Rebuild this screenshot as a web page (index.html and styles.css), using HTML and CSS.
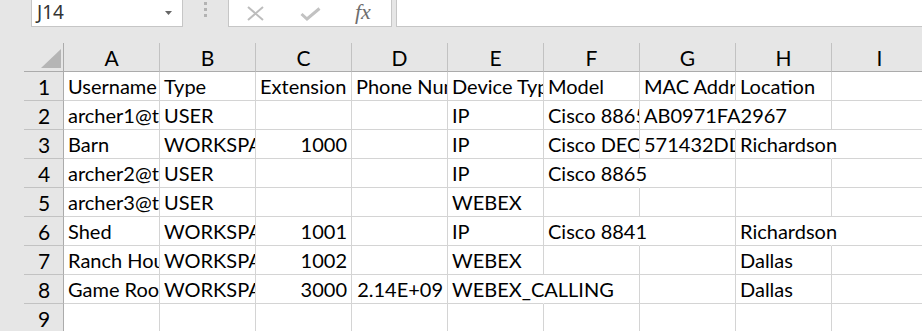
FILE: index.html
```html
<!DOCTYPE html>
<html>
<head>
    <title>Book1 - Excel</title>
    <link rel="stylesheet" href="styles.css">
</head>
<body>
    <div class="bar">
        <div class="namebox">
            <span>J14</span>
            <svg class="caret" width="7" height="4" viewBox="0 0 7 4"><polygon points="0,0 7,0 3.5,4" fill="#666"/></svg>
        </div>
        <div class="grip"><i></i><i></i><i></i></div>
        <div class="fxbox">
            <svg class="cancel" width="17" height="15" viewBox="0 0 17 15"><path d="M1 1 L16 14 M16 1 L1 14" stroke="#bdbdbd" stroke-width="2"/></svg>
            <svg class="enter" width="21" height="14" viewBox="0 0 21 14"><path d="M1.5 7 L7 12 L19.5 1.5" stroke="#c2c2c2" stroke-width="3" fill="none"/></svg>
            <span class="fx">fx</span>
        </div>
        <div class="formula"></div>
    </div>

    <div class="sheet">
        <div class="grid">
            <div class="corner"><svg width="20" height="19" viewBox="0 0 20 19"><polygon points="20,0 20,19 0,19" fill="#b5b5b5"/></svg></div>
            <div class="colhead">A</div>
            <div class="colhead">B</div>
            <div class="colhead">C</div>
            <div class="colhead">D</div>
            <div class="colhead">E</div>
            <div class="colhead">F</div>
            <div class="colhead">G</div>
            <div class="colhead">H</div>
            <div class="colhead">I</div>

            <div class="rowhead">1</div>
            <div class="cell">Username</div>
            <div class="cell">Type</div>
            <div class="cell">Extension</div>
            <div class="cell">Phone Number</div>
            <div class="cell">Device Type</div>
            <div class="cell">Model</div>
            <div class="cell">MAC Address</div>
            <div class="cell">Location</div>
            <div class="cell"></div>

            <div class="rowhead">2</div>
            <div class="cell">archer1@test.com</div>
            <div class="cell">USER</div>
            <div class="cell"></div>
            <div class="cell"></div>
            <div class="cell">IP</div>
            <div class="cell">Cisco 8865</div>
            <div class="cell spill">AB0971FA2967</div>
            <div class="cell"></div>
            <div class="cell"></div>

            <div class="rowhead">3</div>
            <div class="cell">Barn</div>
            <div class="cell">WORKSPACE</div>
            <div class="cell num">1000</div>
            <div class="cell"></div>
            <div class="cell">IP</div>
            <div class="cell">Cisco DECT 6825</div>
            <div class="cell">571432DD0F3A</div>
            <div class="cell spill">Richardson</div>
            <div class="cell"></div>

            <div class="rowhead">4</div>
            <div class="cell">archer2@test.com</div>
            <div class="cell">USER</div>
            <div class="cell"></div>
            <div class="cell"></div>
            <div class="cell">IP</div>
            <div class="cell spill">Cisco 8865</div>
            <div class="cell"></div>
            <div class="cell"></div>
            <div class="cell"></div>

            <div class="rowhead">5</div>
            <div class="cell">archer3@test.com</div>
            <div class="cell">USER</div>
            <div class="cell"></div>
            <div class="cell"></div>
            <div class="cell">WEBEX</div>
            <div class="cell"></div>
            <div class="cell"></div>
            <div class="cell"></div>
            <div class="cell"></div>

            <div class="rowhead">6</div>
            <div class="cell">Shed</div>
            <div class="cell">WORKSPACE</div>
            <div class="cell num">1001</div>
            <div class="cell"></div>
            <div class="cell">IP</div>
            <div class="cell spill">Cisco 8841</div>
            <div class="cell"></div>
            <div class="cell spill">Richardson</div>
            <div class="cell"></div>

            <div class="rowhead">7</div>
            <div class="cell">Ranch House</div>
            <div class="cell">WORKSPACE</div>
            <div class="cell num">1002</div>
            <div class="cell"></div>
            <div class="cell">WEBEX</div>
            <div class="cell"></div>
            <div class="cell"></div>
            <div class="cell">Dallas</div>
            <div class="cell"></div>

            <div class="rowhead">8</div>
            <div class="cell">Game Room</div>
            <div class="cell">WORKSPACE</div>
            <div class="cell num">3000</div>
            <div class="cell num">2.14E+09</div>
            <div class="cell spill">WEBEX_CALLING</div>
            <div class="cell"></div>
            <div class="cell"></div>
            <div class="cell">Dallas</div>
            <div class="cell"></div>

            <div class="rowhead">9</div>
            <div class="cell"></div>
            <div class="cell"></div>
            <div class="cell"></div>
            <div class="cell"></div>
            <div class="cell"></div>
            <div class="cell"></div>
            <div class="cell"></div>
            <div class="cell"></div>
            <div class="cell"></div>
        </div>
    </div>
</body>
</html>
```

FILE: styles.css
```css
html, body {
    margin: 0;
    height: 100%;
    overflow: hidden;
}
body {
    background-color: #e6e6e6;
    font-family: Lato, "Liberation Sans", sans-serif;
    color: #000;
}

/* formula bar */
.bar {
    display: flex;
    height: 27px;
}
.namebox {
    box-sizing: border-box;
    width: 152px;
    margin-left: 31px;
    display: flex;
    align-items: center;
    justify-content: space-between;
    padding: 0 10px 2px 5px;
    background: white;
    border: 1px solid #c6c6c6;
    border-top: none;
    font-family: "Noto Sans", sans-serif;
    font-size: 19px;
    color: #333;
}
.caret {
    margin-top: 1px;
}
.grip {
    width: 45px;
    display: flex;
    flex-direction: column;
    align-items: center;
    gap: 3px;
    padding-top: 2px;
}
.grip i {
    width: 3px;
    height: 3px;
    background: #b3b3b3;
}
.fxbox {
    box-sizing: border-box;
    width: 164px;
    display: flex;
    align-items: center;
    background: white;
    border: 1px solid #c6c6c6;
    border-top: none;
}
.cancel {
    margin-left: 18px;
    margin-top: 1px;
}
.enter {
    margin-left: 36px;
    margin-top: 2px;
}
.fx {
    margin-left: 34px;
    font-family: "Liberation Serif", serif;
    font-style: italic;
    font-size: 22px;
    color: #6e6e6e;
    margin-bottom: 3px;
}
.formula {
    flex: 1;
    margin-left: 4px;
    background: white;
    border: 1px solid #c6c6c6;
    border-top: none;
    border-right: none;
}

/* sheet */
.sheet {
    margin-top: 16px;
    padding-left: 24px;
}
.grid {
    display: grid;
    grid-template-columns: 40px repeat(9, 96px);
    grid-auto-rows: 29px;
    background: white;
    font-size: 20px;
}
.grid > div {
    box-sizing: border-box;
    border-right: 1px solid #d4d4d4;
    border-bottom: 1px solid #d4d4d4;
    white-space: nowrap;
    overflow: hidden;
    line-height: 27px;
    padding-top: 1px;
}
.grid .corner {
    background: #e6e6e6;
    border-right-color: #ababab;
    border-bottom-color: #ababab;
    display: flex;
    justify-content: flex-end;
    align-items: flex-end;
    padding: 0 2px 3px 0;
}
.grid .colhead {
    background: #e6e6e6;
    border-right-color: #c2c2c2;
    border-bottom-color: #ababab;
    text-align: center;
    font-size: 21px;
}
.grid .rowhead {
    background: #e6e6e6;
    border-right-color: #ababab;
    border-bottom-color: #c2c2c2;
    text-align: center;
    padding-left: 1px;
    font-size: 21px;
}
.cell {
    padding-left: 4px;
}
.grid .num {
    text-align: right;
    padding-right: 4px;
}
.grid .spill {
    overflow: visible;
    border-right-color: transparent;
}
```
